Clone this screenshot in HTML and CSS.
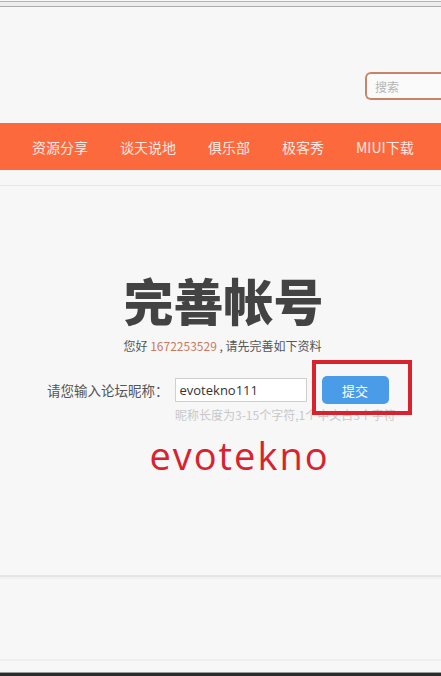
FILE: index.html
```html
<!DOCTYPE html>
<html lang="zh-CN">
<head>
    <meta charset="UTF-8">
    <meta name="viewport" content="width=device-width, initial-scale=1.0">
    <title>完善帐号</title>
    <link rel="stylesheet" href="styles.css">
</head>
<body>
    <div class="browser-bar"></div>

    <div class="header">
        <div class="search">
            <input type="text" placeholder="搜索">
        </div>
    </div>

    <div class="nav">
        <a href="#">资源分享</a>
        <a href="#">谈天说地</a>
        <a href="#">俱乐部</a>
        <a href="#">极客秀</a>
        <a href="#">MIUI下载</a>
    </div>
    <div class="sub-line"></div>

    <div class="main">
        <h1>完善帐号</h1>
        <p class="hello">您好 <span class="uid">1672253529</span> , 请先完善如下资料</p>

        <div class="form-row">
            <label for="nick">请您输入论坛昵称：</label>
            <input type="text" id="nick" value="evotekno111">
            <button class="btn">提交</button>
            <div class="mark"></div>
        </div>
        <p class="hint">昵称长度为3-15个字符,1个中文占3个字符</p>

        <div class="watermark">evotekno</div>
    </div>

    <div class="footer">
        <div class="footer-inner"></div>
    </div>
    <div class="taskbar"></div>
</body>
</html>
```

FILE: styles.css
```css
html, body {
    margin: 0;
    padding: 0;
}
body {
    width: 441px;
    height: 676px;
    overflow: hidden;
    background: #f7f7f7;
    font-family: "Liberation Sans", "Noto Sans CJK SC", sans-serif;
    color: #444;
}
.browser-bar {
    height: 4px;
    margin-top: 1px;
    border-top: 1px solid #b4b4b4;
    border-bottom: 1px solid #acacac;
    background: #ededed;
}
.header {
    height: 116px;
}
.search {
    display: flex;
    justify-content: flex-end;
    padding-top: 65px;
}
.search input {
    width: 66px;
    height: 24px;
    padding: 0 0 0 8px;
    border: 2px solid #c8846b;
    border-right: none;
    border-radius: 6px 0 0 6px;
    background: #fafafa;
    font-family: "Noto Sans CJK SC", sans-serif;
    font-size: 12px;
    box-sizing: content-box;
}
.search input::placeholder {
    color: #b5b5b5;
}
.nav {
    height: 47px;
    background: #fc693d;
    display: flex;
    align-items: center;
    padding-left: 32px;
    gap: 32px;
}
.nav a {
    color: #fbe9e1;
    text-decoration: none;
    font-family: "Noto Sans CJK SC", sans-serif;
    font-size: 14px;
    white-space: nowrap;
}
.sub-line {
    height: 15px;
    border-bottom: 1px solid #e6e6e6;
}
.main {
    text-align: center;
    padding-top: 81px;
    height: 391px;
    box-sizing: border-box;
    border-bottom: 2px solid #e5e5e5;
}
.main h1 {
    margin: 0 0 0 6px;
    font-family: "Noto Sans CJK SC", sans-serif;
    font-weight: 900;
    font-size: 50px;
    line-height: 64px;
    color: #434343;
}
.hello {
    margin: 6px 0 0 4px;
    font-family: "Noto Sans CJK SC", sans-serif;
    font-size: 12px;
    line-height: 18px;
    color: #555;
}
.uid {
    color: #c97a60;
}
.form-row {
    position: relative;
    display: flex;
    align-items: center;
    margin-top: 21px;
    padding-left: 47px;
    height: 28px;
}
.form-row label {
    font-family: "Noto Sans CJK SC", sans-serif;
    font-size: 13.5px;
    color: #555;
    margin-right: 6px;
}
.form-row input {
    width: 122px;
    height: 22px;
    padding: 0 4px;
    border: 1px solid #cfcfcf;
    background: #fff;
    font-family: "Open Sans", sans-serif;
    font-size: 13px;
    color: #333;
    box-sizing: content-box;
}
.btn {
    margin-left: 15px;
    width: 67px;
    height: 28px;
    border: none;
    border-radius: 5px;
    background: #4b9ce8;
    color: #fff;
    font-family: "Noto Sans CJK SC", sans-serif;
    font-size: 13px;
}
.mark {
    position: absolute;
    left: 312px;
    top: -16px;
    width: 92px;
    height: 47px;
    border: 4px solid #d8232f;
}
.hint {
    margin: 3px 0 0 175px;
    text-align: left;
    font-family: "Noto Sans CJK SC", sans-serif;
    font-size: 12px;
    color: #c8c8c8;
    line-height: 16px;
}
.watermark {
    margin: 6px 0 0 38px;
    font-family: "Open Sans", sans-serif;
    font-size: 38px;
    letter-spacing: 2px;
    color: #d8232f;
}
.footer {
    height: 95px;
    border-top: 2px solid #f0f0f0;
    box-sizing: border-box;
}
.footer-inner {
    height: 80px;
    border-bottom: 2px solid #efefef;
}
.taskbar {
    height: 4px;
    background: #2b2b2b;
    border-top: 1px solid #9a9a9a;
}
```
